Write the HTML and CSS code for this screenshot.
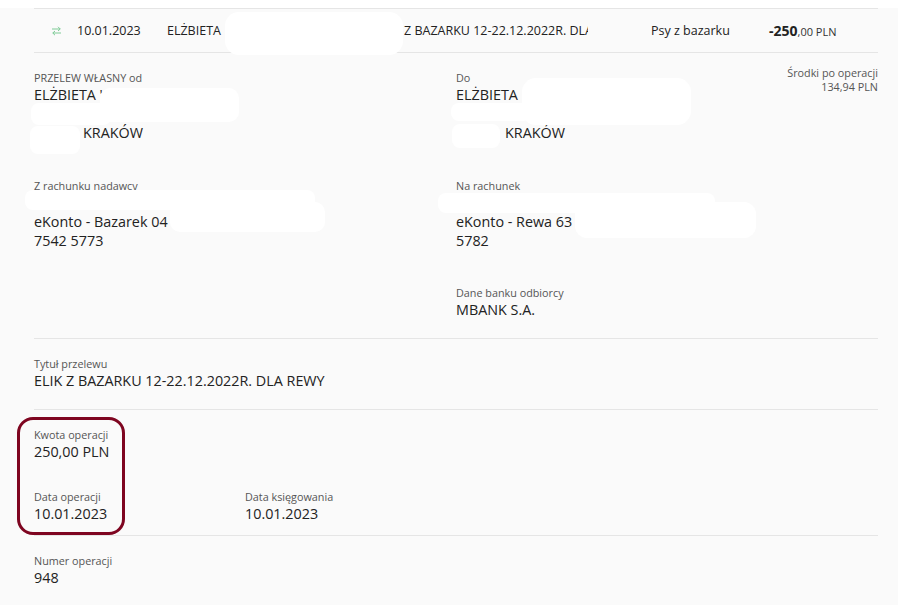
FILE: index.html
```html
<!DOCTYPE html>
<html lang="pl">

<head>
    <meta charset="UTF-8">
    <meta name="viewport" content="width=device-width, initial-scale=1.0">
    <title>Szczegóły operacji</title>

    <link rel="stylesheet" href="styles.css">
</head>

<body>
    <div class="summary">
        <svg class="summary_icon" width="9" height="10" viewBox="0 0 9 10" fill="none" stroke="#7fcb97" stroke-width="1">
            <path d="M0 3H8.3M6 0.8L8.2 3L6 5" />
            <path d="M9 7H0.8M3 5L0.8 7L3 9.2" />
        </svg>
        <span class="summary_date">10.01.2023</span>
        <span class="summary_name">ELŻBIETA</span>
        <span class="summary_title">Z BAZARKU 12-22.12.2022R. DLA REWY</span>
        <span class="summary_category">Psy z bazarku</span>
        <span class="summary_amount"><strong>-250</strong>,00 PLN</span>
    </div>

    <div class="details">
        <section class="parties">
            <div class="field">
                <div class="label">PRZELEW WŁASNY od</div>
                <div class="value">ELŻBIETA '<br><br><span class="indent">KRAKÓW</span></div>
            </div>
            <div class="field">
                <div class="label">Do</div>
                <div class="value">ELŻBIETA<br><br><span class="indent">KRAKÓW</span></div>
            </div>
            <div class="balance">Środki po operacji<br>134,94 PLN</div>

            <div class="field field_account">
                <div class="label">Z rachunku nadawcy</div>
                <div class="value"><br>eKonto - Bazarek 04<br>7542 5773</div>
            </div>
            <div class="field field_account">
                <div class="label">Na rachunek</div>
                <div class="value"><br>eKonto - Rewa 63<br>5782</div>
                <div class="label bank_label">Dane banku odbiorcy</div>
                <div class="value">MBANK S.A.</div>
            </div>
        </section>

        <section class="block">
            <div class="label">Tytuł przelewu</div>
            <div class="value">ELIK Z BAZARKU 12-22.12.2022R. DLA REWY</div>
        </section>

        <section class="block amounts">
            <div class="field field_wide">
                <div class="label">Kwota operacji</div>
                <div class="value">250,00 PLN</div>
            </div>
            <div class="field">
                <div class="label">Data operacji</div>
                <div class="value">10.01.2023</div>
            </div>
            <div class="field">
                <div class="label">Data księgowania</div>
                <div class="value">10.01.2023</div>
            </div>
        </section>

        <section class="block block_last">
            <div class="label">Numer operacji</div>
            <div class="value">948</div>
        </section>
    </div>

    <!-- zamazane dane -->
    <div class="blot blot_1"></div>
    <div class="blot blot_2"></div>
    <div class="blot blot_3"></div>
    <div class="blot blot_4"></div>
    <div class="blot blot_5"></div>
    <div class="blot blot_6"></div>
    <div class="blot blot_7"></div>
    <div class="blot blot_8"></div>
    <div class="blot blot_9"></div>
    <div class="blot blot_10"></div>
    <div class="blot blot_11"></div>

    <div class="highlight"></div>
</body>

</html>
```

FILE: styles.css
```css
html,
body {
    margin: 0;
    height: 605px;
    overflow: hidden;
}

body {
    position: relative;
    background-color: #fafafa;
    border-top: 8px solid #ffffff;
    box-sizing: border-box;
    font-family: "Open Sans", "Liberation Sans", sans-serif;
    color: #222222;
}

.summary {
    display: flex;
    align-items: center;
    height: 43px;
    margin: 0 20px 0 34px;
    border-top: 1px solid #e5e5e5;
    border-bottom: 1px solid #e5e5e5;
    font-size: 12.5px;
    white-space: nowrap;
}

.summary_icon {
    margin-left: 18px;
    flex: none;
}

.summary_date {
    margin-left: 16px;
    width: 90px;
    flex: none;
}

.summary_name {
    width: 237px;
    flex: none;
}

.summary_title {
    width: 184px;
    overflow: hidden;
    flex: none;
}

.summary_category {
    margin-left: 63px;
    width: 118px;
    flex: none;
}

.summary_amount {
    font-size: 11px;
    color: #333333;
}

.summary_amount strong {
    font-size: 14px;
    color: #222222;
}

.details {
    padding: 0 20px 0 34px;
}

.parties {
    display: grid;
    grid-template-columns: 422px 1fr auto;
    padding: 17px 0 19px;
    border-bottom: 1px solid #e5e5e5;
}

.label {
    font-size: 10.8px;
    line-height: 15px;
    color: #555555;
}

.value {
    font-size: 14.35px;
    line-height: 19px;
}

.indent {
    margin-left: 49px;
}

.balance {
    font-size: 10.8px;
    line-height: 14px;
    color: #555555;
    text-align: right;
    margin-top: -4px;
}

.field_account {
    grid-row: 2;
    margin-top: 36px;
}

.bank_label {
    margin-top: 35px;
}

.block {
    padding: 17px 0 19px;
    border-bottom: 1px solid #e5e5e5;
}

.block_last {
    border-bottom: none;
}

.amounts {
    display: grid;
    grid-template-columns: 211px 1fr;
    row-gap: 28px;
    padding-bottom: 12px;
}

.field_wide {
    grid-column: 1 / -1;
}

.blot {
    position: absolute;
    background-color: #ffffff;
    border-radius: 8px;
}

.blot_1 { left: 225px; top: 4px; width: 178px; height: 43px; border-radius: 14px; }
.blot_2 { left: 100px; top: 80px; width: 139px; height: 34px; border-radius: 10px; }
.blot_3 { left: 31px; top: 95px; width: 80px; height: 22px; }
.blot_4 { left: 30px; top: 118px; width: 50px; height: 28px; }
.blot_5 { left: 522px; top: 70px; width: 169px; height: 47px; border-radius: 14px; }
.blot_6 { left: 451px; top: 95px; width: 80px; height: 18px; }
.blot_7 { left: 452px; top: 116px; width: 48px; height: 24px; }
.blot_8 { left: 25px; top: 182px; width: 290px; height: 20px; }
.blot_9 { left: 170px; top: 194px; width: 155px; height: 30px; border-radius: 10px; }
.blot_10 { left: 438px; top: 185px; width: 277px; height: 20px; }
.blot_11 { left: 575px; top: 194px; width: 181px; height: 36px; border-radius: 12px; }

.highlight {
    position: absolute;
    left: 17px;
    top: 409px;
    width: 102px;
    height: 112px;
    border: 3px solid #7e0520;
    border-radius: 16px;
}
```
